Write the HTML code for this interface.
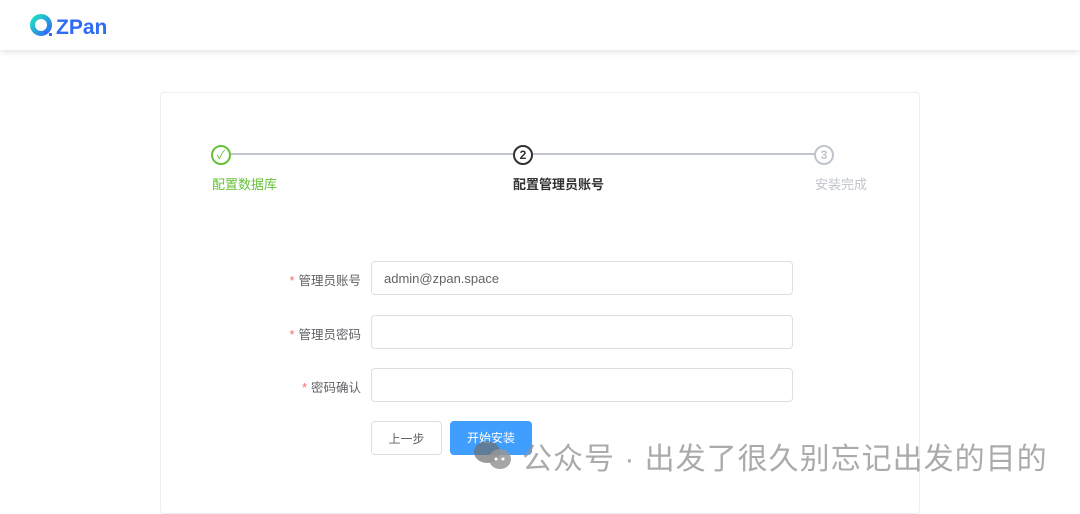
<!DOCTYPE html>
<html><head><meta charset="utf-8"><style>
body{margin:0;width:1080px;height:497px;overflow:hidden;background:#fff;font-family:"Liberation Sans","Noto Sans CJK SC",sans-serif;position:relative}
.hdr{position:absolute;left:0;top:0;width:1080px;height:50px;background:#fff;box-shadow:0 2px 6px rgba(0,0,0,.12);z-index:2}
.logo{position:absolute;left:56px;top:16px;font-size:21px;font-weight:bold;color:#2f6bf5}
.card{position:absolute;left:160px;top:92px;width:758px;height:420px;border:1px solid #ebeef5;border-radius:4px}
.line{position:absolute;top:153px;height:2px;background:#c0c4cc}
.c{position:absolute;width:20px;height:20px;border:2px solid;border-radius:50%;box-sizing:border-box;font-size:12px;font-weight:bold;text-align:center;line-height:16px;background:#fff}
.lab{position:absolute;top:174px;font-size:13px}
.fl{position:absolute;right:719px;font-size:12.5px;color:#606266}
.fl b{color:#f56c6c;font-weight:normal;margin-right:4px}
.in{position:absolute;left:371px;width:422px;height:34px;border:1px solid #dcdfe6;border-radius:4px;box-sizing:border-box;font-size:13px;color:#606266;padding:9px 12px}
.btn{position:absolute;top:421px;height:34px;border-radius:4px;box-sizing:border-box;font-size:12px;text-align:center;line-height:34px}
.wm{position:absolute;left:522px;top:434px;font-size:30px;letter-spacing:1px;color:rgba(150,150,150,.8);white-space:nowrap}
</style></head><body>
<div class="hdr">
<svg style="position:absolute;left:29px;top:13px" width="26" height="26" viewBox="0 0 26 26"><defs><linearGradient id="g" x1="0" y1="0" x2="1" y2="1"><stop offset="0" stop-color="#1ee3c0"/><stop offset="1" stop-color="#2f6bf5"/></linearGradient></defs><circle cx="12" cy="12" r="8.5" fill="none" stroke="url(#g)" stroke-width="5"/><rect x="15" y="18" width="3" height="3" fill="#2f6bf5"/><rect x="20" y="20" width="3" height="3" fill="#2f6bf5"/></svg>
<div class="logo">ZPan</div></div>
<div class="card"></div>
<div class="line" style="left:231px;width:282px"></div>
<div class="line" style="left:533px;width:282px"></div>
<div class="c" style="left:211px;top:145px;border-color:#67c23a;color:#67c23a;font-weight:normal">✓</div>
<div class="c" style="left:513px;top:145px;border-color:#303133;color:#303133">2</div>
<div class="c" style="left:814px;top:145px;border-color:#c0c4cc;color:#c0c4cc">3</div>
<div class="lab" style="left:212px;color:#67c23a">配置数据库</div>
<div class="lab" style="left:513px;color:#303133;font-weight:bold">配置管理员账号</div>
<div class="lab" style="left:815px;color:#c0c4cc">安装完成</div>
<div class="fl" style="top:270px"><b>*</b>管理员账号</div>
<div class="fl" style="top:324px"><b>*</b>管理员密码</div>
<div class="fl" style="top:377px"><b>*</b>密码确认</div>
<div class="in" style="top:261px">admin@zpan.space</div>
<div class="in" style="top:315px"></div>
<div class="in" style="top:368px"></div>
<div class="btn" style="left:371px;width:71px;border:1px solid #dcdfe6;color:#606266">上一步</div>
<div class="btn" style="left:450px;width:82px;background:#409eff;color:#fff">开始安装</div>
<svg style="position:absolute;left:472px;top:440px" width="42" height="32"><ellipse cx="15" cy="12" rx="13" ry="11" fill="rgba(110,110,110,.7)"/><ellipse cx="28" cy="19" rx="11" ry="10" fill="rgba(150,150,150,.85)"/><circle cx="24" cy="19" r="1.5" fill="#fff"/><circle cx="31" cy="19" r="1.5" fill="#fff"/></svg>
<div class="wm">公众号 · 出发了很久别忘记出发的目的</div>
</body></html>
